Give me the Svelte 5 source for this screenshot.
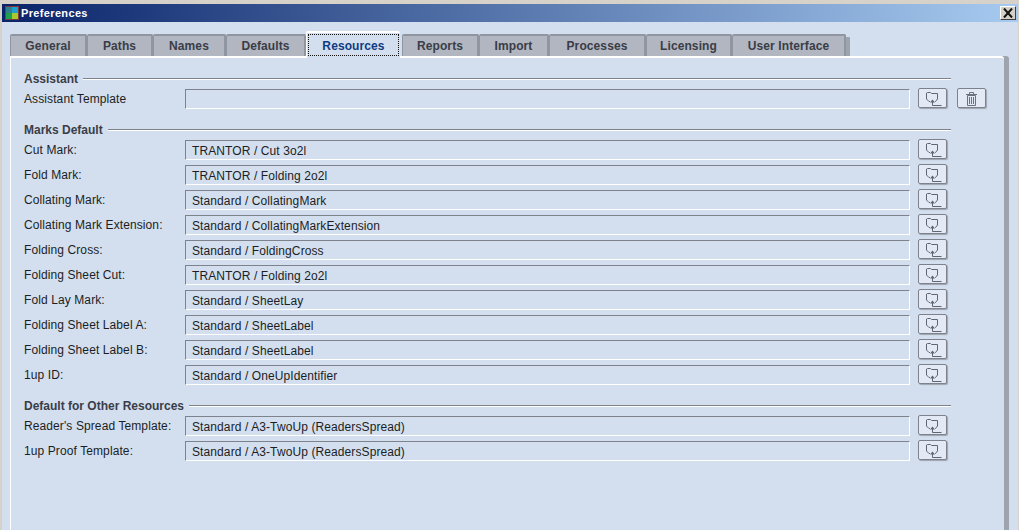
<script>
	const tabs = ['General', 'Paths', 'Names', 'Defaults', 'Resources', 'Reports', 'Import', 'Processes', 'Licensing', 'User Interface'];
	const tabWidths = [77, 66, 73, 80, 94, 77, 70, 97, 86, 114];
	const active = 'Resources';

	const sections = [
		{
			title: 'Assistant',
			rows: [{ label: 'Assistant Template', value: '', trash: true }]
		},
		{
			title: 'Marks Default',
			rows: [
				{ label: 'Cut Mark:', value: 'TRANTOR / Cut 3o2l' },
				{ label: 'Fold Mark:', value: 'TRANTOR / Folding 2o2l' },
				{ label: 'Collating Mark:', value: 'Standard / CollatingMark' },
				{ label: 'Collating Mark Extension:', value: 'Standard / CollatingMarkExtension' },
				{ label: 'Folding Cross:', value: 'Standard / FoldingCross' },
				{ label: 'Folding Sheet Cut:', value: 'TRANTOR / Folding 2o2l' },
				{ label: 'Fold Lay Mark:', value: 'Standard / SheetLay' },
				{ label: 'Folding Sheet Label A:', value: 'Standard / SheetLabel' },
				{ label: 'Folding Sheet Label B:', value: 'Standard / SheetLabel' },
				{ label: '1up ID:', value: 'Standard / OneUpIdentifier' }
			]
		},
		{
			title: 'Default for Other Resources',
			rows: [
				{ label: "Reader's Spread Template:", value: 'Standard / A3-TwoUp (ReadersSpread)' },
				{ label: '1up Proof Template:', value: 'Standard / A3-TwoUp (ReadersSpread)' }
			]
		}
	];
</script>

<div class="window">
	<div class="titlebar">
		<svg class="appicon" width="16" height="16" viewBox="0 0 16 16">
			<rect x="1" y="1" width="14" height="14" fill="#7a3a3a" />
			<rect x="2" y="2" width="6" height="6" fill="#2f7f8f" />
			<rect x="8" y="2" width="6" height="6" fill="#1f9fd0" />
			<rect x="2" y="8" width="6" height="6" fill="#1fa050" />
			<rect x="8" y="8" width="6" height="6" fill="#a8c830" />
		</svg>
		<span class="title">Preferences</span>
		<button class="close" aria-label="Close">
			<svg width="12" height="10" viewBox="0 0 12 10">
				<path d="M2 0.5 L10 9.5 M10 0.5 L2 9.5" stroke="#111" stroke-width="2" fill="none" />
			</svg>
		</button>
	</div>

	<div class="body">
		<div class="tabs">
			{#each tabs as tab, i}
				<div class="tab" class:active={tab === active} class:last={i === tabs.length - 1} style="width: {tabWidths[i]}px">
					<span class="tablabel">{tab}</span>
				</div>
			{/each}
		</div>

		<div class="panel">
			{#each sections as section}
				<section>
					<div class="heading">
						<span>{section.title}</span>
						<i></i>
					</div>
					{#each section.rows as row}
						<div class="row">
							<span class="label">{row.label}</span>
							<div class="field">{row.value}</div>
							<button class="iconbtn" aria-label="Browse">
								<svg width="21" height="16" viewBox="0 0 21 16" fill="none" stroke="#5f6672" stroke-width="1">
									<path d="M8 11.5 H7 L4.5 9 V3 L5.5 2.5 H8.5 L9.5 3.5 H15.5 V9 L13.5 11.5 H13" />
									<path d="M10.5 9.5 L13 12.5 H8 Z" fill="#5f6672" stroke="none" />
									<path d="M10.5 12 V15.5 H19.5" />
								</svg>
							</button>
							{#if row.trash}
								<button class="iconbtn trash" aria-label="Delete">
									<svg width="13" height="15" viewBox="0 0 13 15" fill="none" stroke="#6b717d" stroke-width="1">
										<path d="M1 3.5 H12 M4.5 3 V1.5 H8.5 V3" />
										<path d="M2.5 4.5 H10.5 V14.5 H2.5 Z" />
										<path d="M4.5 6 V13 M6.5 6 V13 M8.5 6 V13" />
									</svg>
								</button>
							{/if}
						</div>
					{/each}
				</section>
			{/each}
		</div>
	</div>
</div>

<style>
	:global(body) {
		margin: 0;
		background: #d6d2c9;
		overflow: hidden;
	}

	.window {
		height: 530px;
		box-sizing: border-box;
		padding: 4px 1px 0 2px;
		display: flex;
		flex-direction: column;
		font-family: "Liberation Sans", Arial, sans-serif;
		font-size: 12px;
		color: #1b1e24;
	}

	.titlebar {
		height: 18px;
		flex: none;
		display: flex;
		align-items: center;
		background: linear-gradient(to right, #0a246a, #a6caf0);
		color: #fff;
		font-size: 11px;
		font-weight: bold;
	}

	.appicon {
		margin-left: 2px;
		flex: none;
	}

	.title {
		margin-left: 1px;
		letter-spacing: 0.35px;
	}

	.close {
		margin-left: auto;
		margin-right: 2px;
		width: 16px;
		height: 14px;
		padding: 0;
		display: flex;
		align-items: center;
		justify-content: center;
		background: #d4d0c8;
		border: 1px solid;
		border-color: #fff #404040 #404040 #fff;
	}

	.body {
		flex: 1;
		background: #d3dfef;
		padding: 12px 9px 0 8px;
		display: flex;
		flex-direction: column;
		min-height: 0;
	}

	.tabs {
		display: flex;
		height: 22px;
		flex: none;
	}

	.tab {
		box-sizing: border-box;
		flex: none;
		height: 22px;
		display: flex;
		align-items: center;
		justify-content: center;
		background: #b1b6c1;
		border-top: 2px solid #8f95a1;
		border-left: 1px solid #8f95a1;
		border-right: 2px solid #8f95a1;
		border-radius: 2px 2px 0 0;
		font-weight: bold;
		letter-spacing: 0.1px;
		color: #3a3d47;
	}

	.tab.active {
		background: #d3dfef;
		color: #0f3b83;
		height: 27px;
		margin-top: -3px;
		margin-right: 2px;
		position: relative;
		padding: 1px 1px 2px 1px;
		border: none;
		border-top: 2px solid #fff;
		border-left: 1px solid #fff;
		z-index: 1;
	}

	.tab.active .tablabel {
		flex: 1;
		align-self: stretch;
		display: flex;
		align-items: center;
		justify-content: center;
		padding-top: 1px;
		border: 1px dotted #111;
	}

	.tab.last {
		box-shadow: 5px 2px 0 -1px #9ea4ae;
	}

	.panel {
		flex: 1;
		min-height: 0;
		margin-right: 5px;
		padding: 13px 0 0 13px;
		background: #d3dfef;
		border-top: 2px solid #fff;
		border-left: 1px solid #fff;
		border-top-right-radius: 3px;
		box-shadow: 5px 0 0 #9ea4ae;
		box-sizing: border-box;
	}

	section {
		margin-bottom: 13px;
	}

	.heading {
		display: flex;
		align-items: center;
		height: 14px;
		margin-bottom: 4px;
		width: 927px;
		font-weight: bold;
		color: #3a3d47;
	}

	.heading span {
		position: relative;
		top: 1px;
	}

	.heading i {
		flex: 1;
		height: 1px;
		margin-left: 5px;
		background: #7d828c;
		box-shadow: 0 1px 0 #fff;
	}

	.row {
		display: flex;
		align-items: center;
		height: 20px;
		margin-bottom: 5px;
	}

	section .row:last-child {
		margin-bottom: 0;
	}

	.label {
		width: 161px;
		flex: none;
		letter-spacing: 0.1px;
	}

	.field {
		box-sizing: border-box;
		width: 725px;
		height: 20px;
		flex: none;
		padding: 1px 0 0 6px;
		line-height: 18px;
		border: 1px solid;
		border-color: #7d828c #fff #fff #7d828c;
		letter-spacing: 0.1px;
	}

	.iconbtn {
		box-sizing: border-box;
		width: 29px;
		height: 20px;
		margin: -1px 0 1px 8px;
		padding: 0;
		flex: none;
		display: flex;
		align-items: center;
		justify-content: center;
		background: #e4eaf5;
		border: 1px solid #7d828c;
		border-radius: 2px;
		box-shadow: 1px 1px 1px #9ea4ae;
	}

	.iconbtn.trash {
		margin-left: 10px;
	}
</style>
